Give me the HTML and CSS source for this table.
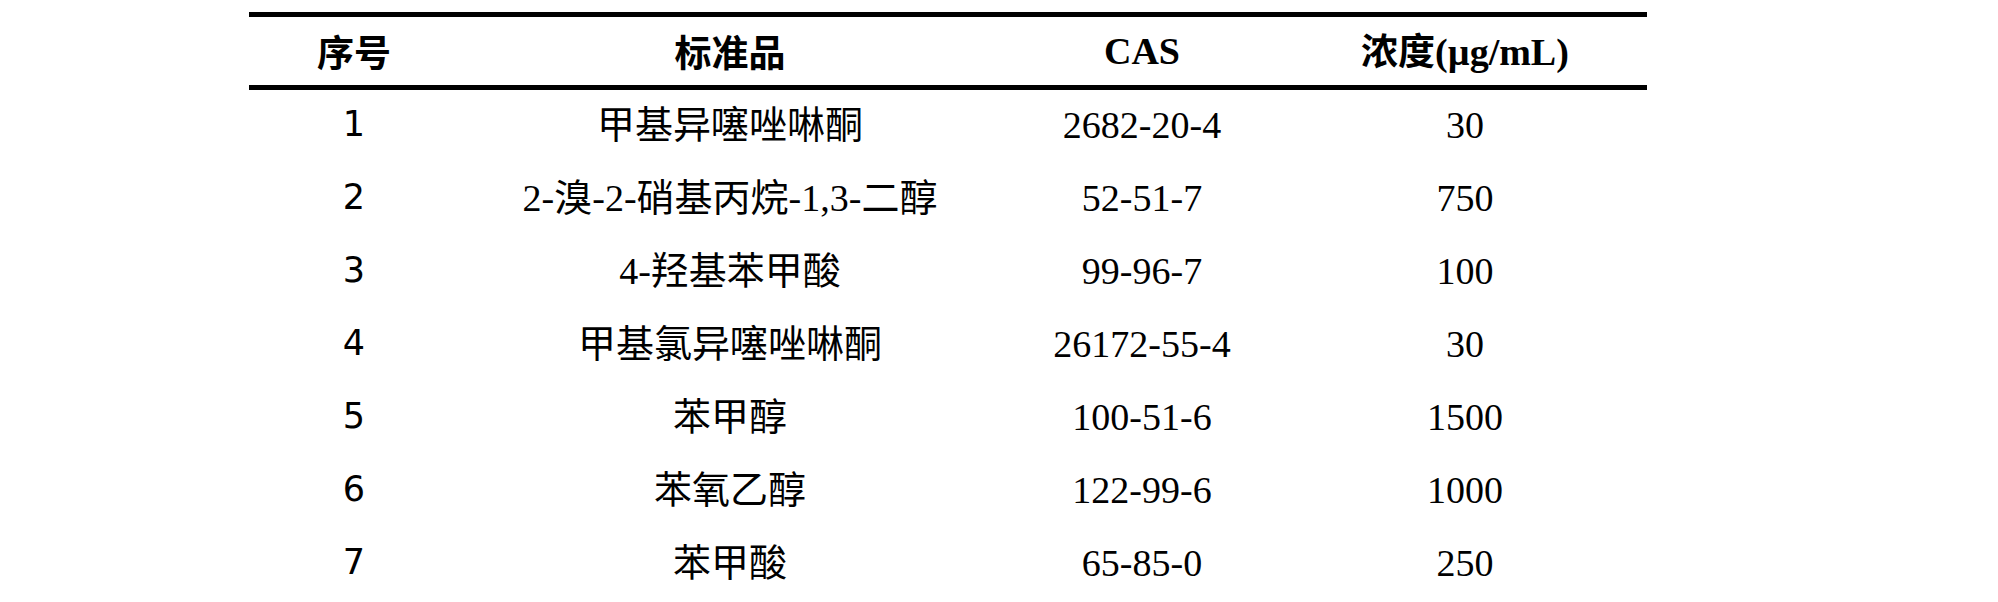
FILE: index.html
```html
<!DOCTYPE html>
<html lang="zh">
<head>
<meta charset="utf-8">
<link rel="stylesheet" href="styles.css">
</head>
<body>
<div class="page">
<table class="std">
  <colgroup>
    <col class="c1"><col class="c2"><col class="c3"><col class="c4">
  </colgroup>
  <thead>
    <tr>
      <th class="zh">序号</th>
      <th class="zh">标准品</th>
      <th class="en">CAS</th>
      <th class="en"><span class="zh">浓度</span>(µg/mL)</th>
    </tr>
  </thead>
  <tbody>
    <tr><td class="num">1</td><td>甲基异噻唑啉酮</td><td>2682-20-4</td><td>30</td></tr>
    <tr><td class="num">2</td><td>2-溴-2-硝基丙烷-1,3-二醇</td><td>52-51-7</td><td>750</td></tr>
    <tr><td class="num">3</td><td>4-羟基苯甲酸</td><td>99-96-7</td><td>100</td></tr>
    <tr><td class="num">4</td><td>甲基氯异噻唑啉酮</td><td>26172-55-4</td><td>30</td></tr>
    <tr><td class="num">5</td><td>苯甲醇</td><td>100-51-6</td><td>1500</td></tr>
    <tr><td class="num">6</td><td>苯氧乙醇</td><td>122-99-6</td><td>1000</td></tr>
    <tr><td class="num">7</td><td>苯甲酸</td><td>65-85-0</td><td>250</td></tr>
  </tbody>
</table>
</div>
</body>
</html>
```
FILE: styles.css
```css
html, body {
  margin: 0;
  padding: 0;
  background: #fff;
}
.page {
  padding: 12px 0 0 249px;
}
.std {
  width: 1398px;
  border-collapse: collapse;
  table-layout: fixed;
  color: #000;
  font-family: "Liberation Serif", "Noto Sans CJK SC", serif;
  font-size: 38px;
}
.c1 { width: 210px; }
.c2 { width: 542px; }
.c3 { width: 282px; }
.c4 { width: 364px; }
.std thead tr {
  border-top: 5px solid #000;
  border-bottom: 5px solid #000;
}
.std th {
  height: 68px;
  padding: 0;
  text-align: center;
  vertical-align: middle;
  font-weight: bold;
  line-height: 1;
}
.std th.zh, .std th .zh {
  font-family: "Noto Sans CJK SC", sans-serif;
  font-size: 37px;
}
.std th.en {
  font-family: "Liberation Serif", "Noto Sans CJK SC", serif;
}
.std td {
  height: 69px;
  padding: 0 0 4px 0;
  text-align: center;
  vertical-align: middle;
  line-height: 1;
  white-space: nowrap;
}
.std td.num {
  font-family: "DejaVu Sans", sans-serif;
  font-size: 35px;
}
```
